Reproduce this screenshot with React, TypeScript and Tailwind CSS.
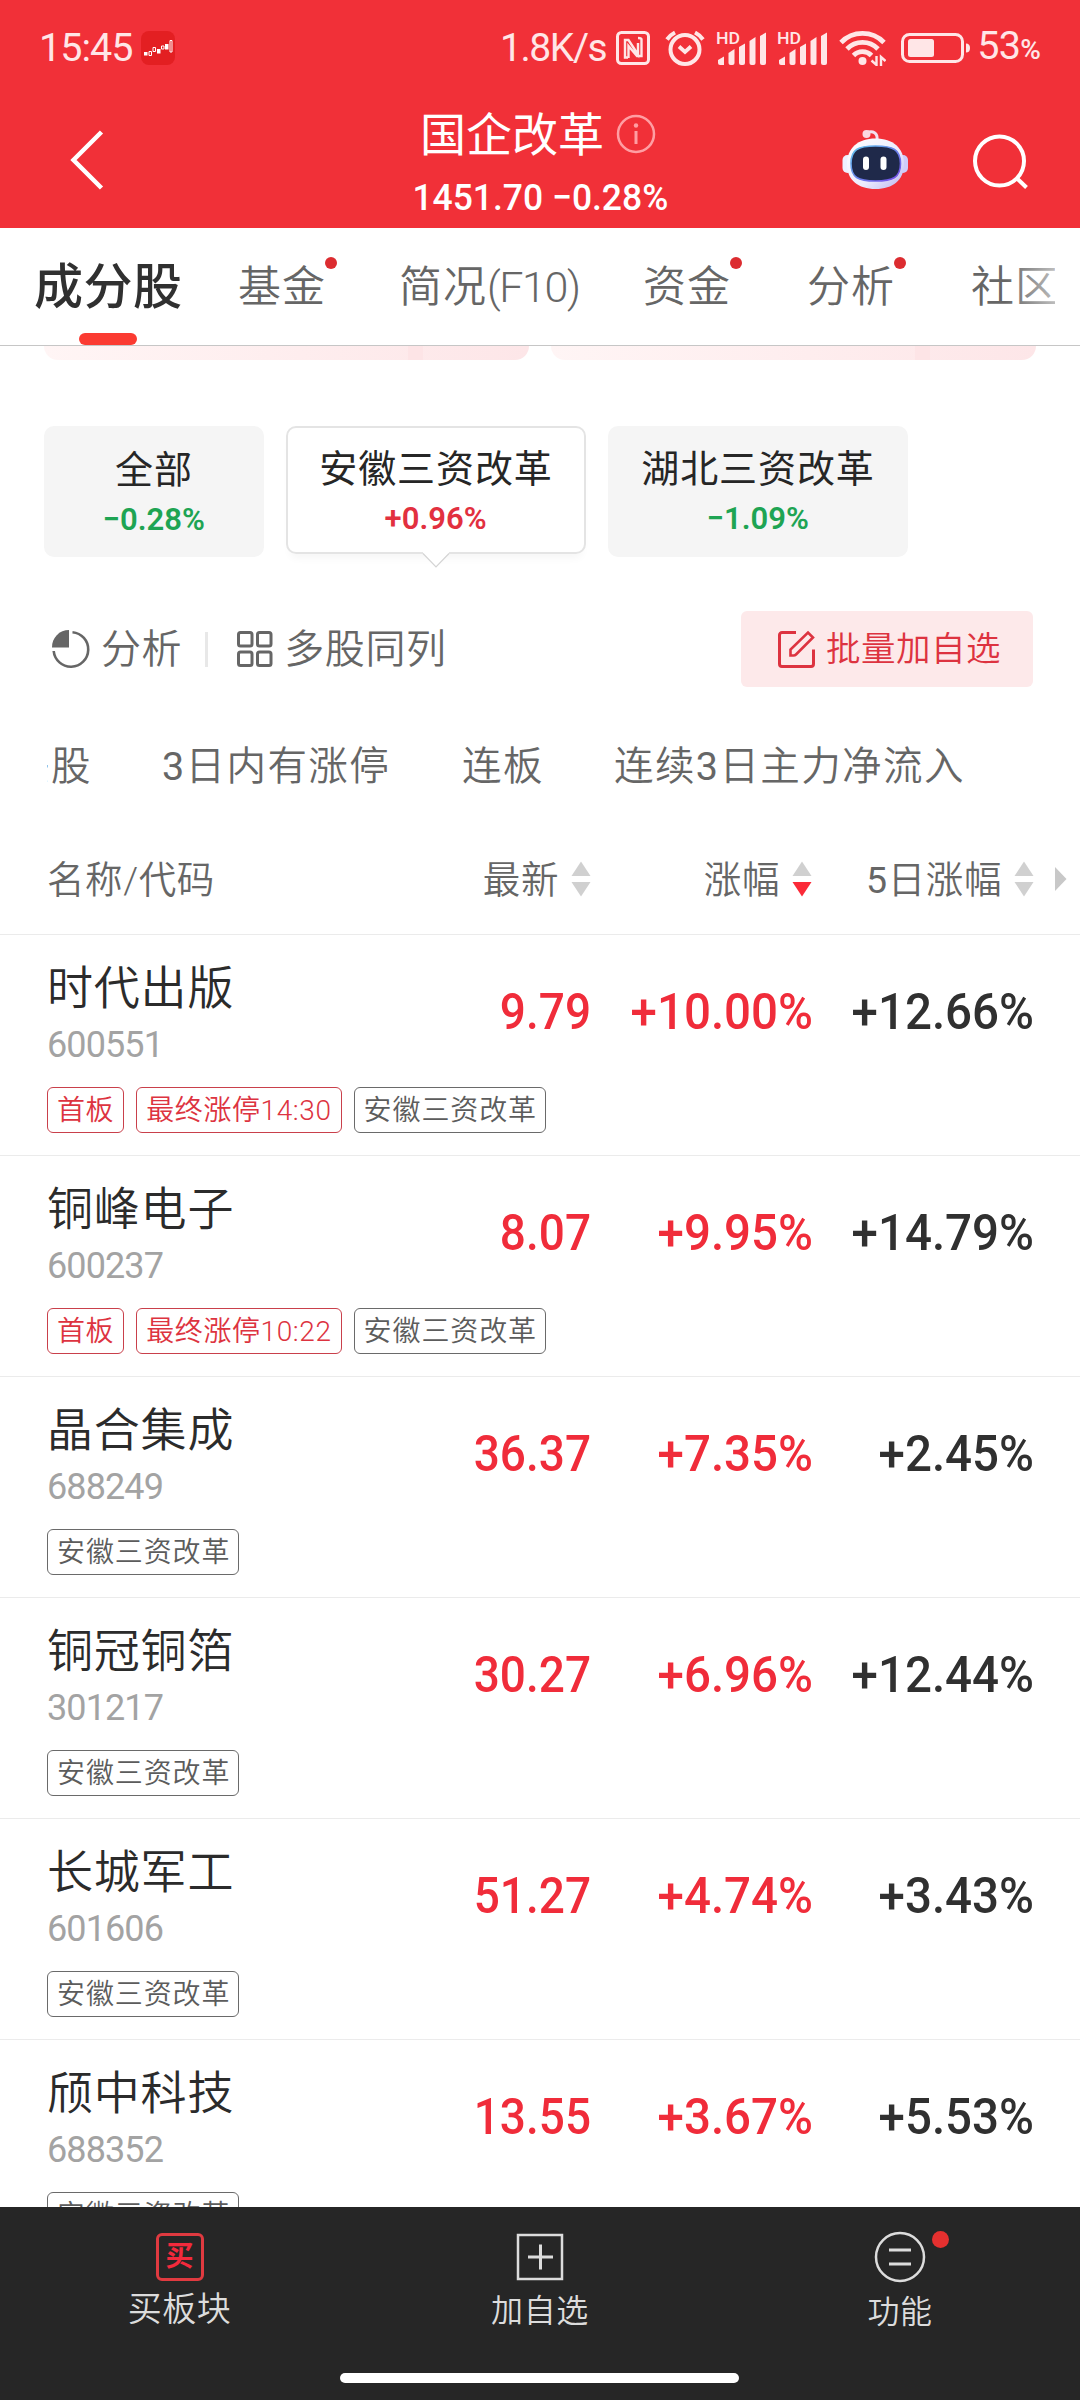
import type { ReactNode } from 'react'

interface Tag {
  text: string
  hot?: boolean
}

interface Stock {
  name: string
  code: string
  price: string
  change: string
  change5: string
  tags: Tag[]
}

const SECTOR = '安徽三资改革'

const stocks: Stock[] = [
  {
    name: '时代出版',
    code: '600551',
    price: '9.79',
    change: '+10.00%',
    change5: '+12.66%',
    tags: [{ text: '首板', hot: true }, { text: '最终涨停14:30', hot: true }, { text: SECTOR }],
  },
  {
    name: '铜峰电子',
    code: '600237',
    price: '8.07',
    change: '+9.95%',
    change5: '+14.79%',
    tags: [{ text: '首板', hot: true }, { text: '最终涨停10:22', hot: true }, { text: SECTOR }],
  },
  { name: '晶合集成', code: '688249', price: '36.37', change: '+7.35%', change5: '+2.45%', tags: [{ text: SECTOR }] },
  { name: '铜冠铜箔', code: '301217', price: '30.27', change: '+6.96%', change5: '+12.44%', tags: [{ text: SECTOR }] },
  { name: '长城军工', code: '601606', price: '51.27', change: '+4.74%', change5: '+3.43%', tags: [{ text: SECTOR }] },
  { name: '颀中科技', code: '688352', price: '13.55', change: '+3.67%', change5: '+5.53%', tags: [{ text: SECTOR }] },
]

function Signal() {
  return (
    <svg width="50" height="34" viewBox="0 0 50 34" fill="#ffe6e7" className="overflow-visible">
      <text x="0" y="13" fontSize="16" fontWeight="500" textLength="24" lengthAdjust="spacingAndGlyphs">HD</text>
      <path d="M2 32v-3l6-3.500v8.500H4a2 2 0 0 1-2-2z" />
      <path d="M12.500 22l6-4v14a2 2 0 0 1-2 2h-2a2 2 0 0 1-2-2z" />
      <path d="M23 16l6-3.500V32a2 2 0 0 1-2 2h-2a2 2 0 0 1-2-2z" />
      <path d="M33.500 10l6-4v26a2 2 0 0 1-2 2h-2a2 2 0 0 1-2-2z" />
      <path d="M44 5l6-3.500V32a2 2 0 0 1-2 2h-2a2 2 0 0 1-2-2z" />
    </svg>
  )
}

function StatusBar() {
  return (
    <div className="flex h-[96px] items-center pl-[39px] pr-10 text-[#ffe6e7]">
      <span className="w-[102px] text-[39.5px] leading-[98px] tracking-[-1px]">15:45</span>
      <svg width="34" height="34" viewBox="0 0 34 34">
        <rect width="34" height="34" rx="8" fill="#e31f22" />
        <path d="M3 21h3.500v3.500H3zM16 18h3.500v4.500H16zM24 13h3.500v5.500H24z" fill="#fff" />
        <path d="M8 20.500h2.500v4H8zM12 16.500h2.500v4H12zM20.500 15h2.500v3h-2.500zM29 9.500h2v11.500h-2z" fill="none" stroke="#fff" strokeWidth="1" />
      </svg>
      <div className="ml-auto flex items-center">
        <span className="mr-[10px] text-[39px] leading-[98px] tracking-[-1.4px]">1.8K/s</span>
        {/* NFC */}
        <svg width="34" height="34" viewBox="0 0 34 34" fill="none" stroke="#ffe6e7" strokeWidth="3" className="mr-[15px]">
          <rect x="1.500" y="1.500" width="31" height="31" rx="4" />
          <path d="M12 26.500H9V9h3.500L22 23.500V12M12.500 27V15l8.500 10h4.500V8.500Q25.500 7 22 7" strokeWidth="2.400" />
        </svg>
        {/* alarm */}
        <svg width="40" height="36" viewBox="0 0 40 36" fill="none" stroke="#ffe6e7" className="mr-[11px]">
          <circle cx="20" cy="19.500" r="14.500" strokeWidth="4" />
          <path d="M14 16.500l6 5.500 6-5.500" strokeWidth="3.800" />
          <path d="M2 9.500a22 22 0 0 1 8-7M38 9.500a22 22 0 0 0-8-7" strokeWidth="4" />
        </svg>
        <Signal />
        <div className="w-[11px]" />
        <Signal />
        {/* wifi */}
        <svg width="47" height="36" viewBox="0 0 47 36" fill="none" stroke="#ffe6e7" strokeWidth="4.800" className="ml-[12px] mr-[15px]">
          <path d="M2 12.500a30 30 0 0 1 43 0" />
          <path d="M8 19a21.500 21.500 0 0 1 31 0" />
          <path d="M14.500 25.500a12.500 12.500 0 0 1 18 0" />
          <circle cx="23.500" cy="31" r="4" fill="#ffe6e7" stroke="none" />
          <path d="M37.500 26v9l-5-4.500M42 36v-9l4.500 4" strokeWidth="2.400" />
        </svg>
        <svg width="70" height="30" viewBox="0 0 70 30" fill="none" className="mr-[6px]">
          <rect x="1.500" y="1.500" width="60" height="27" rx="7" stroke="#ffe6e7" strokeWidth="3" />
          <rect x="7" y="6" width="26" height="18" rx="2.500" fill="#ffe6e7" />
          <path d="M65 10.500q4 0 4 4.500t-4 4.500z" fill="#ffe6e7" />
        </svg>
        <span className="text-[39.5px] leading-[100px] tracking-[-0.8px]">53<span className="text-[28px] font-medium">%</span></span>
      </div>
    </div>
  )
}

function Robot() {
  return (
    <svg width="68" height="64" viewBox="0 0 68 64">
      <defs>
        <linearGradient id="shell" x1="0" y1="0" x2="1" y2="1">
          <stop offset="0" stopColor="#ffffff" />
          <stop offset="0.6" stopColor="#ecebfd" />
          <stop offset="1" stopColor="#b9b4ee" />
        </linearGradient>
        <linearGradient id="rim" x1="0" y1="0" x2="1" y2="1">
          <stop offset="0" stopColor="#63c7ee" />
          <stop offset="1" stopColor="#7446e8" />
        </linearGradient>
      </defs>
      <path d="M24 5c7-3 12 0 11 7" fill="none" stroke="#f3dfee" strokeWidth="3" />
      <circle cx="24.500" cy="6" r="4" fill="#fbd7e0" />
      <rect x="0.500" y="27" width="10" height="18" rx="5" fill="#eef0ff" />
      <rect x="56" y="27" width="10" height="18" rx="5" fill="#cfcbfa" />
      <path d="M33.500 10.500C51 10.500 62 20 62 36S51 61 33.500 61 5 52 5 36s11-25.500 28.500-25.500z" fill="url(#shell)" />
      <path d="M33.500 18C51 18 58.500 21.500 58.500 35.500S51 53 33.500 53 9 49.500 9 35.500 16 18 33.500 18z" fill="#1f294a" stroke="url(#rim)" strokeWidth="1.600" />
      <rect x="21" y="28.500" width="6" height="13.500" rx="3" fill="#fff" />
      <rect x="38.500" y="28.500" width="6" height="13.500" rx="3" fill="#fff" />
    </svg>
  )
}

function Header() {
  return (
    <header className="h-[228px] shrink-0 bg-[#f13038] text-white">
      <StatusBar />
      <div className="grid h-[132px] grid-cols-[1fr_auto_1fr]">
        <svg width="36" height="64" viewBox="0 0 36 64" fill="none" stroke="#fff" strokeWidth="4.500" className="ml-[69px] mt-8">
          <path d="M32.500 4L4.500 32l28 28" />
        </svg>
        <div className="flex flex-col items-center">
          <div className="flex h-[76px] items-center pr-[4px]">
            <span className="text-[46px] leading-[76px] pt-[2px]">国企改革</span>
            <svg width="40" height="40" viewBox="0 0 40 40" fill="none" stroke="#ff9ea3" strokeWidth="2.500" className="ml-[12px]">
              <circle cx="20" cy="20" r="18" />
              <path d="M20 17v13" strokeWidth="3" />
              <circle cx="20" cy="11.500" r="2.200" fill="#ff9ea3" stroke="none" />
            </svg>
          </div>
          <div className="scale-x-[0.945] text-[37.5px] font-medium leading-[50px]">1451.70 −0.28%</div>
        </div>
        <div className="flex justify-end pr-[52px] pt-8">
          <Robot />
          <svg width="58" height="58" viewBox="0 0 58 58" fill="none" stroke="#fff" strokeWidth="4" className="ml-[60px] mt-[5px]">
            <circle cx="29.500" cy="28" r="24.500" />
            <path d="M46.500 45l10 9.500" />
          </svg>
        </div>
      </div>
    </header>
  )
}

function Tab({ children, dot }: { children: ReactNode; dot?: boolean }) {
  return (
    <span className="relative inline-block whitespace-nowrap">
      {children}
      {dot && <i className="absolute -right-[11px] top-[29px] size-3 rounded-full bg-[#dc2c30]" />}
    </span>
  )
}

function Tabs() {
  return (
    <nav className="relative flex h-[118px] shrink-0 border-b border-[#c6c6c6] text-[43px] font-[350] leading-[118px] tracking-[1px] text-[#666]">
      <div className="ml-[34px] w-[204px] shrink-0">
        <div className="h-[105px] text-[49px] font-medium leading-[119px] tracking-[0.5px] text-[#303030]">成分股</div>
        <div className="ml-[45px] h-3 w-[58px] rounded-full bg-[#fb3b32]" />
      </div>
      <div className="w-[161px] shrink-0"><Tab dot>基金</Tab></div>
      <div className="w-[244px] shrink-0"><Tab>简况<span className="tracking-[-1.4px]">(F10)</span></Tab></div>
      <div className="w-[164px] shrink-0"><Tab dot>资金</Tab></div>
      <div className="w-[164px] shrink-0"><Tab dot>分析</Tab></div>
      <div className="w-[84px] shrink-0 overflow-hidden"><Tab>社区</Tab></div>
      <div className="absolute right-0 top-0 h-[117px] w-[75px] bg-linear-to-r from-white/0 to-white/85" />
    </nav>
  )
}

function SectorCard({ name, pct, className, up }: { name: string; pct: string; className: string; up?: boolean }) {
  return (
    <div className={`relative flex flex-col items-center rounded-[10px] ${className}`}>
      <div className="text-[38px] leading-[52px] tracking-[0.9px] text-[#262626]">{name}</div>
      <div className={`mt-[3px] scale-x-[0.97] text-[32px] font-semibold leading-[40px] ${up ? 'text-[#e2303f]' : 'text-[#1ea453]'}`}>{pct}</div>
      {up && (
        <svg width="28" height="16" viewBox="0 0 28 16" className="absolute left-[134px] top-[124px]">
          <path d="M1 1.500L14 15 27 1.500V0H1z" fill="#fff" />
          <path d="M1 1.500L14 15 27 1.500" fill="none" stroke="#d4d4d4" strokeWidth="1.200" />
        </svg>
      )}
    </div>
  )
}

function Toolbar() {
  return (
    <div className="flex h-[76px] items-center pl-[51px] pr-[47px] text-[40px] font-[350] tracking-[0.6px] text-[#666]">
      <svg width="40" height="40" viewBox="0 0 40 40" className="mr-[10px]">
        <path d="M18 18.500H1A17 17 0 0 1 18 1z" fill="#666" />
        <path d="M21.500 3.200A17.300 17.300 0 1 1 2.700 22" fill="none" stroke="#666" strokeWidth="2.600" />
      </svg>
      <span className="pt-px">分析</span>
      <div className="ml-[23px] mr-[29px] h-[35px] w-[3px] bg-[#e8e8e8]" />
      <svg width="36" height="36" viewBox="0 0 36 36" fill="none" stroke="#666" strokeWidth="3" className="mr-[11px]">
        <rect x="1.500" y="1.500" width="13.500" height="13.500" rx="2" />
        <rect x="20.500" y="1.500" width="13.500" height="13.500" rx="2" />
        <rect x="1.500" y="21" width="13.500" height="13.500" rx="2" />
        <rect x="20.500" y="21" width="13.500" height="13.500" rx="2" />
      </svg>
      <span className="pt-px">多股同列</span>
      <button className="ml-auto flex h-[76px] w-[292px] items-center rounded-md bg-[#fde9ea] pl-[36px] text-[34.5px] tracking-[0.5px] text-[#dd3340]">
        <svg width="38" height="38" viewBox="0 0 38 38" fill="none" stroke="#dd3340" strokeWidth="3" className="mr-[11px]">
          <path d="M19 2.500H5A2.500 2.500 0 0 0 2.500 5v29A2.500 2.500 0 0 0 5 36.500h29a2.500 2.500 0 0 0 2.500-2.500V19.500" />
          <path d="M13.500 25.500v-6L31 2.500l5 5L19 24.500q-1 1-2.500 1z" strokeWidth="2.600" />
        </svg>
        <span className="pt-[2px]">批量加自选</span>
      </button>
    </div>
  )
}

function Sort({ active }: { active?: boolean }) {
  return (
    <svg width="20" height="36" viewBox="0 0 20 36" className="ml-[12px] shrink-0">
      <path d="M10 .5l9.500 14.500H.5z" fill="#d0d0d0" />
      <path d="M10 35.500L19.500 21H.5z" fill={active ? '#fb2a38' : '#d0d0d0'} />
    </svg>
  )
}

function HeadCell({ children, active }: { children: ReactNode; active?: boolean }) {
  return (
    <div className="flex items-center justify-end whitespace-nowrap">
      <span className="pt-[2px]">{children}</span>
      <Sort active={active} />
    </div>
  )
}

function Value({ text, className }: { text: string; className: string }) {
  return (
    <div className={`origin-right text-right text-[50.5px] font-medium leading-[153px] ${className}`}>{text}</div>
  )
}

function StockRow({ stock }: { stock: Stock }) {
  return (
    <div className="h-[221px] border-b border-[#ebebeb] pl-[47px]">
      <div className="grid h-[152px] grid-cols-[322px_221px_221px_221px]">
        <div className="pt-[22px]">
          <div className="text-[46px] font-[350] leading-[62px] tracking-[0.8px] text-[#2b2b2b]">{stock.name}</div>
          <div className="text-[36px] leading-[52px] tracking-[-0.9px] text-[#a3a3a3]">{stock.code}</div>
        </div>
        <Value text={stock.price} className="-mr-px scale-x-[0.91] text-[#f02c3a]" />
        <Value text={stock.change} className="-mr-[2px] scale-x-[0.94] text-[#f02c3a]" />
        <Value text={stock.change5} className="-mr-[2px] scale-x-[0.94] text-[#303030]" />
      </div>
      <div className="flex gap-3">
        {stock.tags.map((tag) => (
          <span
            key={tag.text}
            className={`h-[46px] whitespace-nowrap rounded-[6px] border text-[28px] font-[350] leading-[46px] ${
              tag.hot ? 'border-[#c9404b] px-[9px] tracking-[0.6px] text-[#dd3340]' : 'border-[#6a6a6a] pl-[9px] pr-2 tracking-[0.9px] text-[#5c5c5c]'
            }`}
          >
            {tag.text}
          </span>
        ))}
      </div>
    </div>
  )
}

function BottomBar() {
  return (
    <footer className="h-[193px] shrink-0 bg-[#262626] font-[350] text-[#dcdcdc]">
      <div className="grid h-[166px] grid-cols-3">
        <div className="flex flex-col items-center pt-[26px] pr-px">
          <div className="flex size-[48px] items-center justify-center rounded-[6px] border-[3px] border-[#e03a40] text-[28px] font-bold leading-none text-[#f32a3c]">
            买
          </div>
          <div className="text-[34px] leading-[57px] tracking-[0.5px]">买板块</div>
        </div>
        <div className="flex flex-col items-center pt-[26px]">
          <svg width="48" height="48" viewBox="0 0 48 48" fill="none" stroke="#dcdcdc" strokeWidth="2.500">
            <rect x="2" y="2" width="44" height="44" />
            <path d="M12 24h25M24.500 11.500v25" strokeWidth="3" />
          </svg>
          <div className="text-[32px] leading-[60px] tracking-[0.6px]">加自选</div>
        </div>
        <div className="flex flex-col items-center pt-[24px]">
          <div className="relative">
            <svg width="52" height="52" viewBox="0 0 52 52" fill="none" stroke="#dcdcdc" strokeWidth="2.500">
              <circle cx="26" cy="26" r="24" />
              <path d="M15 19h22M15 33h22" strokeWidth="3" />
            </svg>
            <i className="absolute left-[58px] top-0 size-[17px] rounded-full bg-[#e5302f]" />
          </div>
          <div className="text-[32px] leading-[58px] tracking-[0.5px]">功能</div>
        </div>
      </div>
      <div className="ml-[340px] h-[10px] w-[399px] rounded-full bg-white" />
    </footer>
  )
}

export default function App() {
  return (
    <div className="flex h-[2400px] w-[1080px] flex-col overflow-hidden bg-white font-['Roboto','Noto_Sans_CJK_SC',sans-serif]">
      <Header />
      <Tabs />

      {/* bottom edge of the scrolled-away banners */}
      <div className="flex h-[14px] shrink-0 gap-[22px] pl-11">
        {[0, 1].map((i) => (
          <div key={i} className="flex w-[485px] rounded-b-[16px] bg-linear-to-r from-[#fff5f5] to-[#fde6e8]">
            <div className="ml-[364px] w-[15px] bg-[#fde4e6]" />
          </div>
        ))}
      </div>

      <div className="mt-[66px] flex shrink-0 gap-[22px] pl-11">
        <SectorCard name="全部" pct="−0.28%" className="h-[131px] w-[220px] bg-[#f5f5f5] pt-[18px]" />
        <SectorCard name={SECTOR} pct="+0.96%" up className="h-[128px] w-[300px] border-2 border-[#e4e4e4] pt-[15px] shadow-[0_8px_8px_-4px_rgba(0,0,0,0.04)]" />
        <SectorCard name="湖北三资改革" pct="−1.09%" className="h-[131px] w-[300px] bg-[#f5f5f5] pt-[17px]" />
      </div>

      <div className="mt-[54px] shrink-0">
        <Toolbar />
      </div>

      <div className="mt-[49px] ml-[47px] flex h-[60px] shrink-0 overflow-hidden whitespace-nowrap text-[39.5px] font-[350] leading-[61px] tracking-[1.4px] text-[#666]">
        <div className="flex w-[115px] shrink-0 justify-start">
          <span className="-ml-[37px]">头股</span>
        </div>
        <div className="w-[300px] shrink-0"><span className="font-normal">3</span>日内有涨停</div>
        <div className="w-[152px] shrink-0">连板</div>
        <div>连续<span className="font-normal">3</span>日主力净流入</div>
      </div>

      <div className="flex h-[139px] shrink-0 items-center border-b border-[#ebebeb] pl-[47px] pt-[28px] text-[37.5px] font-[350] tracking-[0.6px] text-[#666]">
        <div className="grid grid-cols-[322px_222px_221px_222px]">
          <div className="pt-[2px]">名称/代码</div>
          <HeadCell>最新</HeadCell>
          <HeadCell active>涨幅</HeadCell>
          <HeadCell><span className="font-normal">5</span>日涨幅</HeadCell>
        </div>
        <svg width="12" height="24" viewBox="0 0 12 24" className="ml-[21px]">
          <path d="M0 0l11.500 12L0 24z" fill="#c8c8c8" />
        </svg>
      </div>

      <div className="min-h-0 flex-1 overflow-hidden">
        {stocks.map((stock) => (
          <StockRow key={stock.code} stock={stock} />
        ))}
      </div>

      <BottomBar />
    </div>
  )
}
